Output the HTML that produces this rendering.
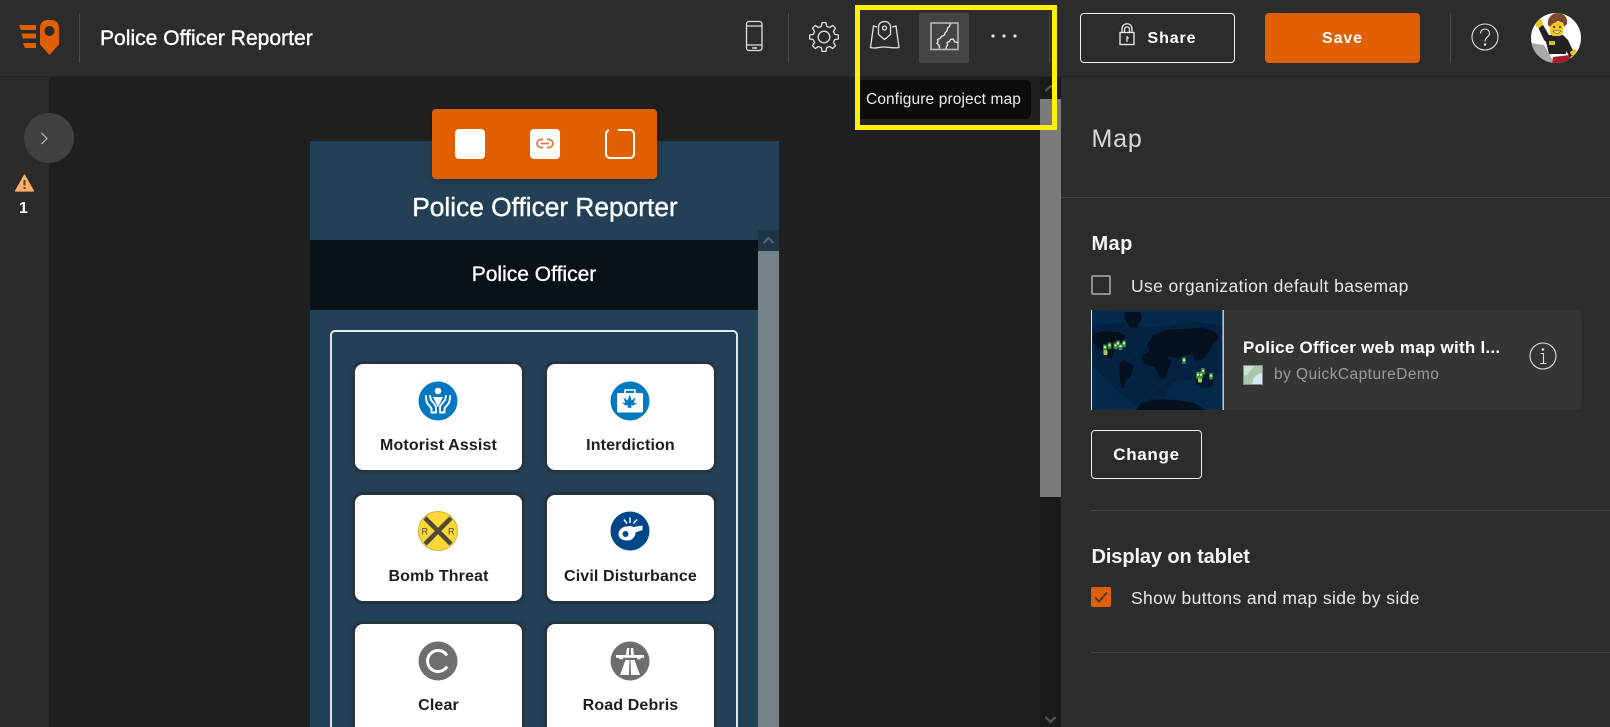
<!DOCTYPE html>
<html><head><meta charset="utf-8"><title>Police Officer Reporter</title>
<style>
html,body{margin:0;padding:0;width:1610px;height:727px;overflow:hidden;background:#202020}
body{position:relative;font-family:"Liberation Sans",sans-serif;color:#fff}
.a{position:absolute;box-sizing:border-box}
.t{position:absolute;white-space:nowrap;height:30px;line-height:30px}
.c{text-align:center}
.card{position:absolute;width:169px;height:108px;background:#fff;border:1px solid #333;border-radius:9px;box-shadow:0 0 3px 1px rgba(30,30,30,.55);box-sizing:border-box}
.lbl{position:absolute;width:169px;text-align:center;white-space:nowrap;height:24px;line-height:24px;font-weight:bold;font-size:16px;letter-spacing:.13px;color:#1d1d1d}
svg{position:absolute;overflow:visible}
.sep{position:absolute;width:1px;background:#4a4a4a;top:13px;height:50px}
</style></head><body>

<div class="a" style="left:0;top:0;width:1610px;height:77px;background:#2c2c2c;border-bottom:1px solid #252525"></div>
<div class="a" style="left:0;top:77px;width:49px;height:650px;background:#2b2b2b"></div>
<div class="a" style="left:1061px;top:77px;width:549px;height:650px;background:#2c2c2c"></div>

<!-- Logo -->
<svg style="left:0;top:0" width="80" height="77" fill="#e05f00">
<path d="M19 25h17v5H21z M21.500 33.500H36v5H23z M23 43h13v5H25z"/>
<path fill-rule="evenodd" d="M40 28c0-5 3-8 8-8h3c5 0 8 3 8 8v16.500L49.500 55 40 44.500z M49.500 26a5 5 0 1 0 .01 0z"/>
</svg>
<div class="sep" style="left:79px"></div>
<div class="t" style="left:100px;top:24px;font-size:21px;letter-spacing:.03px;-webkit-text-stroke:.4px #fff">Police Officer Reporter</div>

<!-- Sidebar -->
<div class="a" style="left:24px;top:113px;width:50px;height:50px;border-radius:50%;background:#404040"></div>
<svg style="left:0;top:0" width="60" height="220" fill="none">
<path d="M41.500 133l5.500 5.500-5.500 5.500" stroke="#c8c8c8" stroke-width="1"/>
<path d="M24.500 175L33.500 191H15.500z" fill="#ffb066" stroke="#ffb066" stroke-width="1.200" stroke-linejoin="round"/>
<path d="M24.500 180v5.500M24.500 187v2" stroke="#5a4630" stroke-width="2"/>
</svg>
<div class="t" style="left:19px;top:194px;font-size:16px;font-weight:bold">1</div>

<!-- Header icons -->
<svg style="left:0;top:0" width="1610" height="77" fill="none" stroke="#e0e0e0" stroke-width="1.300">
<rect x="746.500" y="21.500" width="15.500" height="29" rx="2.500"/>
<path d="M747 26h15M747 45h15"/><path d="M752 48h5" stroke-width="1.500"/>
<g transform="translate(824 37)">
<circle r="5.800"/>
<polyline stroke-linejoin="round" points="-2.660,-10.670 -2.020,-14.360 2.020,-14.360 2.660,-10.670 5.660,-9.420"/>
<polyline transform="rotate(45)" stroke-linejoin="round" points="-2.660,-10.670 -2.020,-14.360 2.020,-14.360 2.660,-10.670 5.660,-9.420"/>
<polyline transform="rotate(90)" stroke-linejoin="round" points="-2.660,-10.670 -2.020,-14.360 2.020,-14.360 2.660,-10.670 5.660,-9.420"/>
<polyline transform="rotate(135)" stroke-linejoin="round" points="-2.660,-10.670 -2.020,-14.360 2.020,-14.360 2.660,-10.670 5.660,-9.420"/>
<polyline transform="rotate(180)" stroke-linejoin="round" points="-2.660,-10.670 -2.020,-14.360 2.020,-14.360 2.660,-10.670 5.660,-9.420"/>
<polyline transform="rotate(225)" stroke-linejoin="round" points="-2.660,-10.670 -2.020,-14.360 2.020,-14.360 2.660,-10.670 5.660,-9.420"/>
<polyline transform="rotate(270)" stroke-linejoin="round" points="-2.660,-10.670 -2.020,-14.360 2.020,-14.360 2.660,-10.670 5.660,-9.420"/>
<polyline transform="rotate(315)" stroke-linejoin="round" points="-2.660,-10.670 -2.020,-14.360 2.020,-14.360 2.660,-10.670 5.660,-9.420"/>
</g>
<path d="M877 27l-3.500-1-3 21.500c5 1.500 8-.5 13-.5s9 1.500 15.500 0.500L896 26l-4 1"/>
<path d="M884.500 21.500c-3.500 0-6 2.300-6 5.500v7.500l6 5 6-5V27c0-3.200-2.500-5.500-6-5.500z"/>
<circle cx="884.500" cy="28" r="2"/>
</svg>
<div class="sep" style="left:788px"></div>
<div class="a" style="left:919px;top:13px;width:50px;height:50px;background:#444;border-radius:2px"></div>
<svg style="left:0;top:0" width="1100" height="77" fill="none">
<rect x="931" y="23" width="27" height="26.500" stroke="#b5b5b5" stroke-width="1.600"/>
<path d="M950.500 23.500l-1 3-2 1.500-.5 3-2 2-.5 2-3 1.500-1.500 2-2.500 1 .5 2.500-1 1.500 2 1.500 .5 3.500M958 42.500l-3-.5-2-3-2.500.5-1 2-2.500 1 .5 3-1 1-.5 2.500" stroke="#e8e8e8" stroke-width="1.300"/>
<circle cx="993" cy="36" r="1.600" fill="#e0e0e0"/><circle cx="1004" cy="36" r="1.600" fill="#e0e0e0"/><circle cx="1015" cy="36" r="1.600" fill="#e0e0e0"/>
</svg>
<div class="sep" style="left:1049px"></div>

<!-- Share / Save -->
<div class="a" style="left:1080px;top:13px;width:155px;height:50px;border:1px solid #f0f0f0;border-radius:4px"></div>
<svg style="left:0;top:-1.500px" width="1200" height="77" fill="none" stroke="#eee" stroke-width="1.300">
<rect x="1120" y="33.500" width="14" height="12"/>
<path d="M1122 33.500V30c0-7 10-7 10 0v3.500M1124.500 33.500V30.500c0-3.500 5-3.500 5 0v3"/>
<path d="M1127 37v6M1127 39h2" stroke-width="1.200"/>
</svg>
<div class="t" style="left:1147.500px;top:24px;font-size:16px;font-weight:bold;letter-spacing:.9px">Share</div>
<div class="a" style="left:1265px;top:13px;width:155px;height:50px;background:#e05f00;border-radius:4px"></div>
<div class="t c" style="left:1265px;width:155px;top:24px;font-size:16px;font-weight:bold;letter-spacing:.9px">Save</div>
<div class="sep" style="left:1450px"></div>
<svg style="left:1471px;top:23px" width="28" height="28" fill="none" stroke="#e0e0e0" stroke-width="1.100">
<circle cx="14" cy="14" r="13"/>
<path d="M9.500 10.500c0-6 9-6 9 0 0 3.500-4.500 3.500-4.500 8"/><circle cx="14" cy="21.500" r=".7" fill="#e0e0e0"/>
</svg>
<!-- Avatar -->
<svg style="left:1531px;top:13px" width="50" height="50" viewBox="0 0 50 50">
<clipPath id="av"><circle cx="25" cy="25" r="25"/></clipPath>
<g clip-path="url(#av)">
<rect width="50" height="50" fill="#fff"/>
<path d="M0 30l13 2 8 14v4H0z" fill="#a9a9ab"/>
<path d="M21 50l1-6 17-2 2 8z" fill="#a81c2a"/>
<path d="M7 14l5-2 6 10h14l5 5 7 15-5 2-4-6v3H18l-3-12-2-2z" fill="#222"/>
<path d="M4 9l3-3 4 1 1 5-4 3-3-2z" fill="#f2c418"/>
<path d="M39 39l5-3 3 4-3 4-4-2z" fill="#f2c418"/>
<rect x="19" y="9" width="13" height="14" rx="4" fill="#f5c518"/>
<path d="M17 12c-1-6 3-12 10-12 6 0 10 5 9 11l-3 3-1-4-5-2-6 3-2 3z" fill="#7a4a2a"/>
<circle cx="23" cy="14" r="1" fill="#222"/><circle cx="29" cy="14" r="1" fill="#222"/>
<path d="M22 18c2 3 6 3 8 0z" fill="#fff" stroke="#222" stroke-width=".5"/>
<rect x="18" y="28" width="6" height="4" fill="#d9b62c"/>
</g></svg>

<!-- Phone preview -->
<div class="a" style="left:310px;top:141px;width:448px;height:586px;background:#234156"></div>
<div class="a" style="left:310px;top:240px;width:448px;height:70px;background:#0a1118"></div>
<div class="a" style="left:758px;top:141px;width:21px;height:89px;background:#234156"></div>
<div class="a" style="left:758px;top:230px;width:21px;height:21px;background:#1e3546"></div>
<div class="a" style="left:758px;top:251px;width:21px;height:476px;background:#768289"></div>
<svg style="left:758px;top:230px" width="21" height="21" fill="none"><path d="M5.500 13l5-5 5 5" stroke="#4f6474" stroke-width="2.200"/></svg>
<div class="t c" style="left:310px;width:470px;top:192px;font-size:26.300px;-webkit-text-stroke:.4px #fff">Police Officer Reporter</div>
<div class="t c" style="left:310px;width:448px;top:260px;font-size:21px;-webkit-text-stroke:.35px #fff">Police Officer</div>
<div class="a" style="left:330px;top:330px;width:408px;height:420px;border:2px solid #e6e6e6;border-radius:5px"></div>

<!-- Toolbar -->
<div class="a" style="left:432px;top:109px;width:225px;height:70px;background:#e05f00;border-radius:4px;box-shadow:0 2px 8px rgba(0,0,0,.25)"></div>
<div class="a" style="left:455px;top:129px;width:30px;height:30px;background:#fff;border-radius:4px"></div>
<div class="a" style="left:530px;top:129px;width:30px;height:30px;background:#fff;border-radius:4px"></div>
<svg style="left:530px;top:129px" width="30" height="30" fill="none" stroke="#e8772a" stroke-width="1.700">
<path d="M13 10.500H11a3.500 3.500 0 0 0 0 8h2M17 10.500h2a3.500 3.500 0 0 1 0 8h-2M11 14.500h8"/></svg>
<svg style="left:605px;top:129px" width="30" height="30" fill="none" stroke="#fff" stroke-width="2">
<path d="M13 1h12a4 4 0 0 1 4 4v20a4 4 0 0 1-4 4H5a4 4 0 0 1-4-4V5a4 4 0 0 1 3-3.800"/></svg>

<!-- Cards -->
<div class="card" style="left:354px;top:362.500px"></div><div class="lbl" style="left:354px;top:434px">Motorist Assist</div>
<div class="card" style="left:546px;top:362.500px"></div><div class="lbl" style="left:546px;top:434px">Interdiction</div>
<div class="card" style="left:354px;top:493.500px"></div><div class="lbl" style="left:354px;top:564.500px">Bomb Threat</div>
<div class="card" style="left:546px;top:493.500px"></div><div class="lbl" style="left:546px;top:564.500px">Civil Disturbance</div>
<div class="card" style="left:354px;top:623px;height:120px"></div><div class="lbl" style="left:354px;top:694px">Clear</div>
<div class="card" style="left:546px;top:623px;height:120px"></div><div class="lbl" style="left:546px;top:694px">Road Debris</div>

<svg style="left:418px;top:381px" width="40" height="40">
<circle cx="20" cy="20" r="19.500" fill="#0079c1"/>
<circle cx="20" cy="10" r="3.300" fill="#fff"/>
<path d="M15 16h10l-5 10.500z" fill="#fff"/>
<g fill="none" stroke="#fff" stroke-width="1.900" stroke-linejoin="round" stroke-linecap="round">
<path d="M7.800 15l1 6.500 4.700 6v4h4.500v-5c0-2.500-3-5-5-7.500l-1-4"/>
<path d="M32.200 15l-1 6.500-4.700 6v4H22v-5c0-2.500 3-5 5-7.500l1-4"/>
</g></svg>
<svg style="left:610px;top:381px" width="40" height="40">
<circle cx="20" cy="20" r="19.500" fill="#0079c1"/>
<path d="M15 12V9h10v3" fill="none" stroke="#fff" stroke-width="1.600"/>
<rect x="7" y="12" width="26" height="19.500" rx="1.500" fill="#fff"/>
<path d="M20 13.500l1.500 6 3.800-3-1.500 5.500 3.700-.5-4 3-2.500-.3.700 2.500h-4.400l.7-2.500-2.500.3-4-3 3.700.5-1.500-5.500 3.800 3z" fill="#0079c1"/>
</svg>
<svg style="left:418px;top:511px" width="40" height="40">
<circle cx="20" cy="20" r="19.500" fill="#fdd835" stroke="#cdb03a" stroke-width="1"/>
<path d="M7 7l26 26M33 7L7 33" stroke="#4f4a35" stroke-width="4.500"/>
<text x="3.500" y="23.500" font-size="9" fill="#4f4a35" font-family="Liberation Sans">R</text>
<text x="30" y="23.500" font-size="9" fill="#4f4a35" font-family="Liberation Sans">R</text>
</svg>
<svg style="left:610px;top:511px" width="40" height="40">
<circle cx="20" cy="20" r="19.500" fill="#00478a"/>
<path d="M8.500 23c0-4 4-7.500 8-7.500l4-.5 3 1 9-1.500v4.500l-7 2.500c0 4-3 8-8 8-5 0-9-2-9-6.500z" fill="#fff"/>
<circle cx="15.500" cy="23" r="3" fill="#00478a"/>
<path d="M20 6.500v5.500M14 8.500l3 4M27 8.500l-3.500 4" stroke="#fff" stroke-width="1.500" fill="none"/>
</svg>
<svg style="left:418px;top:641px" width="40" height="40">
<circle cx="20" cy="20" r="19.500" fill="#6e6e6e"/>
<path d="M29 14.500A10.500 10.500 0 1 0 29 25.500" fill="none" stroke="#fff" stroke-width="3"/>
</svg>
<svg style="left:610px;top:641px" width="40" height="40">
<circle cx="20" cy="20" r="19.500" fill="#6e6e6e"/>
<path d="M17 7h2.200l-.3 7h-3zM20.800 7H23l1 7h-3z" fill="#fff"/>
<path d="M6 14h28v2.800h-3l-.5 1.500h-3l-.5-1.500H13l-.5 1.500h-3l-.5-1.500H6z" fill="#fff"/>
<path d="M15.500 19h4l-.5 15h-9zM20.500 19h4l5.500 15h-9z" fill="#fff"/>
</svg>

<!-- Main scrollbar -->
<div class="a" style="left:1040px;top:77px;width:21px;height:650px;background:#1a1a1a"></div>
<div class="a" style="left:1040px;top:99px;width:21px;height:398px;background:#7b7b7b"></div>
<svg style="left:1040px;top:77px" width="21" height="650" fill="none" stroke="#555" stroke-width="2.200">
<path d="M5.500 14l5-5 5 5"/><path d="M5.500 640l5 5 5-5"/></svg>

<!-- Right panel -->
<div class="t" style="left:1091.500px;top:124px;font-size:25px;letter-spacing:.8px;color:#d8d8d8">Map</div>
<div class="a" style="left:1061px;top:197px;width:549px;height:1px;background:#444"></div>
<div class="t" style="left:1091.500px;top:229px;font-size:20px;font-weight:bold;letter-spacing:.4px;color:#f5f5f5">Map</div>
<div class="a" style="left:1091px;top:275px;width:20px;height:20px;border:2px solid #8f8f8f;border-radius:2px"></div>
<div class="t" style="left:1131px;top:271px;font-size:17.500px;letter-spacing:.38px;color:#e8e8e8">Use organization default basemap</div>

<div class="a" style="left:1091px;top:310px;width:491px;height:100px;background:#353535;border-radius:6px"></div>
<svg style="left:1091px;top:310px" width="133" height="100" viewBox="0 0 133 102" preserveAspectRatio="none">
<rect width="132" height="102" fill="#042342"/>
<g stroke="#0b3555" stroke-width=".5" opacity=".6"><path d="M0 25L100 102M30 0L132 80M70 0L132 45M0 65L50 102M132 25L40 102M100 0L0 80M60 0L0 40"/></g>
<g fill="#083252" opacity=".5"><path d="M0 0h132v16l-30-4-40 6-30-6-32 4z"/><path d="M0 55l28 30 22 17H0z"/><path d="M80 75l50-10v37H70z"/></g>
<g fill="#03111f">
<path d="M33 2h16l2 6-5 10h-7l-5-9z"/>
<path d="M2 24l14-3 12 2 7 3-3 7-6 2-3 7-2 7h-4l-6-8-6-3-3-7z"/>
<path d="M28 53l6-2 9 6-3 10-5 5-2 8-3-1-2-15z"/>
<path d="M52 46l8-5 10 1 5 4 6 6-4 8-2 8-5 3-3-6-3-7-9-2-4-6z"/>
<path d="M56 36l6-10 14-6 20-1 16-1 12 4 4 6-7 8-4 8-5 6-7 2-4-7-8 1-6 4-8-2-10-3-9-1z"/>
<path d="M105 68l13-3 5 6-3 8-9 0-7-4z" opacity=".7"/>
<path d="M45 102l6-8 16-3 22 1 15 3 10 7z"/>
</g>
<g>
<g fill="#3a8a38">
<rect x="12" y="35" width="4" height="7" rx="1.500"/><rect x="12.500" y="41" width="4" height="5" rx="1.500" fill="#a9c95a"/><rect x="16.500" y="33" width="4" height="7" rx="1.500"/><rect x="22.500" y="33" width="4" height="7" rx="1.500"/><rect x="25" y="31" width="4" height="7" rx="1.500"/><rect x="27.500" y="34" width="4" height="7" rx="1.500"/><rect x="31" y="31" width="4" height="7" rx="1.500"/><rect x="91" y="48" width="4" height="7" rx="1.500"/><rect x="105" y="63" width="4" height="7" rx="1.500"/><rect x="107" y="69" width="4" height="5" rx="1.500" fill="#a9c95a"/><rect x="108" y="63" width="4" height="7" rx="1.500"/><rect x="110" y="59" width="4" height="7" rx="1.500"/><rect x="118" y="64" width="4" height="7" rx="1.500"/>
</g>
<g fill="#dfeedd">
<rect x="13" y="37" width="2" height="2"/><rect x="17.500" y="35" width="2" height="2"/><rect x="23.500" y="35" width="2" height="2"/><rect x="26" y="33" width="2" height="2"/><rect x="28.500" y="36" width="2" height="2"/><rect x="32" y="33" width="2" height="2"/><rect x="92" y="50" width="2" height="2"/><rect x="106" y="65" width="2" height="2"/><rect x="109" y="65" width="2" height="2"/><rect x="111" y="61" width="2" height="2"/><rect x="119" y="66" width="2" height="2"/>
</g></g>
<rect x="0" y="0" width="1" height="102" fill="#e8e8e8"/><rect x="131.500" y="0" width="1.300" height="102" fill="#e8e8e8"/>
</svg>
<div class="t" style="left:1243px;top:333px;font-size:17px;font-weight:bold;letter-spacing:.25px;color:#fff">Police Officer web map with l...</div>
<svg style="left:1243px;top:365px" width="20" height="20">
<rect x=".5" y=".5" width="19" height="19" fill="#a9c9ae" stroke="#8b8b8b"/>
<path d="M9 19l2-6 4-4 4-1v11z" fill="#d4e9f2"/><path d="M1 1h11L8 5 5 9 1 11z" fill="#cfe3d0"/>
</svg>
<div class="t" style="left:1274px;top:360px;font-size:15.500px;letter-spacing:.45px;color:#9b9b9b">by QuickCaptureDemo</div>
<svg style="left:1529px;top:342px" width="28" height="28" fill="none" stroke="#e0e0e0" stroke-width="1.100">
<circle cx="14" cy="14" r="13"/><path d="M11.500 11.500h3v10M11 21.500h6.500"/><circle cx="14" cy="7.500" r=".8" fill="#e0e0e0"/>
</svg>
<div class="a" style="left:1091px;top:430px;width:111px;height:49px;border:1px solid #f0f0f0;border-radius:4px"></div>
<div class="t c" style="left:1091px;width:111px;top:440px;font-size:17px;font-weight:bold;letter-spacing:.7px">Change</div>
<div class="a" style="left:1091px;top:510px;width:519px;height:1px;background:#444"></div>
<div class="t" style="left:1091.500px;top:542px;font-size:20px;font-weight:bold;color:#f5f5f5;letter-spacing:-.1px">Display on tablet</div>
<div class="a" style="left:1091px;top:587px;width:20px;height:20px;background:#e05f00;border-radius:2px"></div>
<svg style="left:1091px;top:587px" width="20" height="20" fill="none"><path d="M4 10.500l4 4 8-9" stroke="#3a3a3a" stroke-width="1.700"/></svg>
<div class="t" style="left:1131px;top:583px;font-size:17.500px;letter-spacing:.38px;color:#e8e8e8">Show buttons and map side by side</div>
<div class="a" style="left:1091px;top:652px;width:519px;height:1px;background:#444"></div>

<!-- Tooltip -->
<div class="a" style="left:857px;top:80px;width:174px;height:39px;background:#0c0c0c;border-radius:5px"></div>
<div class="t" style="left:866px;top:85px;font-size:15.500px;letter-spacing:.12px;color:#eee">Configure project map</div>

<!-- Yellow highlight -->
<div class="a" style="left:855px;top:5px;width:202px;height:125px;border:5px solid #fff200"></div>
</body></html>
